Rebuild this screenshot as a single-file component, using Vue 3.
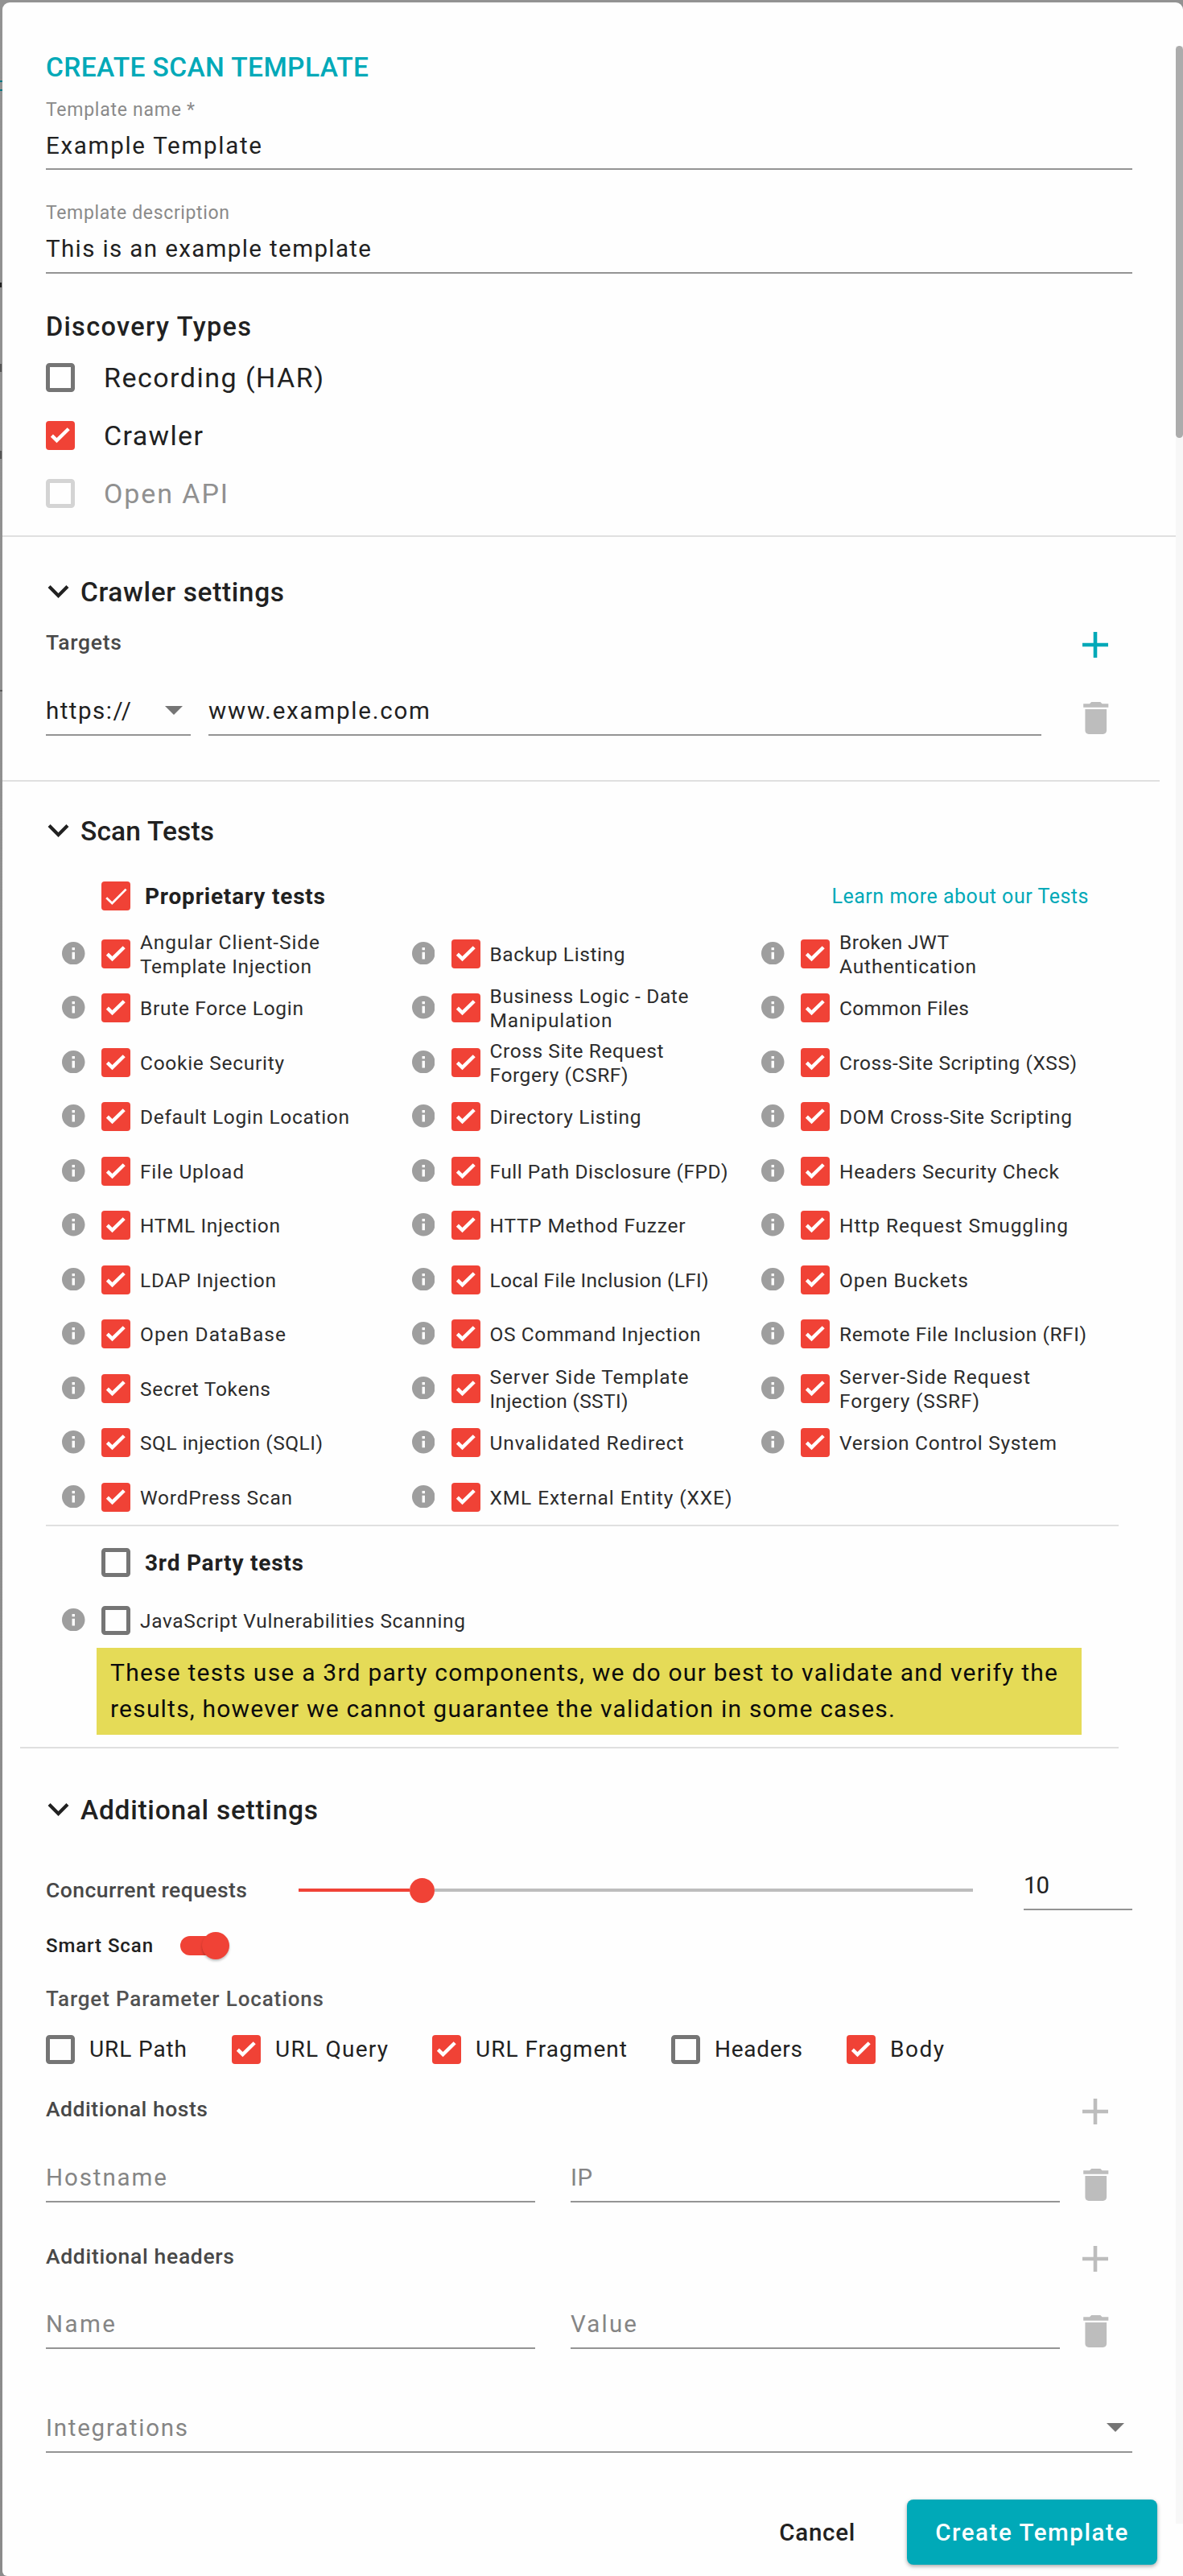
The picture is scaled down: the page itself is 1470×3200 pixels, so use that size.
<script setup>
import { h } from 'vue'

// Spreads a label's letters so that it takes up the given width in pixels.
const vFit = {
  mounted(el, binding) {
    const count = el.textContent.length
    if (!binding.value || count < 2) return
    const natural = el.getBoundingClientRect().width
    el.style.letterSpacing = ((binding.value - natural) / (count - 1)).toFixed(3) + 'px'
  },
}

const CheckBox = (props) =>
  h('svg', { viewBox: '0 0 36 36', width: 36, height: 36, style: { flex: 'none', display: 'block' } },
    props.on
      ? [
          h('rect', { width: 36, height: 36, rx: 4, fill: '#f04236' }),
          h('path', props.thin
            ? { d: 'M6.2 20.2L13.3 27L30.6 9.6', fill: 'none', stroke: '#fff', 'stroke-width': 2.7 }
            : { d: 'M7.4 18.2L13.5 24.1L28.2 9.7', fill: 'none', stroke: '#fff', 'stroke-width': 4.4 }),
        ]
      : [h('rect', { x: 2.5, y: 2.5, width: 31, height: 31, rx: 2, fill: 'none', stroke: props.off ? '#d4d4d4' : '#757575', 'stroke-width': 5 })])
CheckBox.props = { on: Boolean, off: Boolean, thin: Boolean }

const icon = (viewBox, width, height, d) => () =>
  h('svg', { viewBox, width, height, fill: 'currentColor', style: { flex: 'none', display: 'block' } }, [h('path', { d })])
const InfoIcon = icon('2 2 20 20', 28.5, 28.5, 'M12 2C6.48 2 2 6.48 2 12s4.48 10 10 10 10-4.48 10-10S17.52 2 12 2zm1.2 15h-2.4v-6h2.4v6zm0-7.8h-2.4V6.9h2.4v2.3z')
const TrashIcon = icon('5 3 14 18', 31.5, 40, 'M6 19c0 1.1.9 2 2 2h8c1.1 0 2-.9 2-2V7H6v12zM19 4h-3.5l-1-1h-5l-1 1H5v2h14V4z')
const PlusIcon = icon('5 5 14 14', 32, 32, 'M19 13h-6v6h-2v-6H5v-2h6V5h2v6h6v2z')
const Chevron = icon('6 8.59 12 7.41', 27, 16, 'M16.59 8.59L12 13.17 7.41 8.59 6 10l6 6 6-6z')
const Caret = icon('7 10 10 5', 22, 11, 'M7 10l5 5 5-5z')

const tests = [
  [['Angular Client-Side', 223], ['Template Injection', 213]],
  [['Backup Listing', 168]],
  [['Broken JWT', 136], ['Authentication', 170]],
  [['Brute Force Login', 203]],
  [['Business Logic - Date', 247], ['Manipulation', 152]],
  [['Common Files', 161]],
  [['Cookie Security', 179]],
  [['Cross Site Request', 216], ['Forgery (CSRF)', 172]],
  [['Cross-Site Scripting (XSS)', 295]],
  [['Default Login Location', 260]],
  [['Directory Listing', 188]],
  [['DOM Cross-Site Scripting', 289]],
  [['File Upload', 129]],
  [['Full Path Disclosure (FPD)', 296]],
  [['Headers Security Check', 273]],
  [['HTML Injection', 174]],
  [['HTTP Method Fuzzer', 243]],
  [['Http Request Smuggling', 284]],
  [['LDAP Injection', 169]],
  [['Local File Inclusion (LFI)', 272]],
  [['Open Buckets', 160]],
  [['Open DataBase', 181]],
  [['OS Command Injection', 262]],
  [['Remote File Inclusion (RFI)', 307]],
  [['Secret Tokens', 162]],
  [['Server Side Template', 247], ['Injection (SSTI)', 172]],
  [['Server-Side Request', 237], ['Forgery (SSRF)', 174]],
  [['SQL injection (SQLI)', 227]],
  [['Unvalidated Redirect', 241]],
  [['Version Control System', 270]],
  [['WordPress Scan', 189]],
  [['XML External Entity (XXE)', 301]],
]

const discovery = [
  { name: 'Recording (HAR)', width: 273 },
  { name: 'Crawler', width: 123, on: true },
  { name: 'Open API', width: 154, off: true },
]

const locations = [
  { name: 'URL Path', width: 121 },
  { name: 'URL Query', width: 140, on: true },
  { name: 'URL Fragment', width: 188, on: true },
  { name: 'Headers', width: 109 },
  { name: 'Body', width: 67, on: true },
]

const extras = [
  { title: 'Additional hosts', width: 201, a: 'Hostname', aw: 150, b: 'IP', bw: 27, cls: 'hosts' },
  { title: 'Additional headers', width: 234, a: 'Name', aw: 86, b: 'Value', bw: 82, cls: 'headers' },
]
</script>

<template>
  <div class="backdrop">
    <main class="dialog">
      <h1 class="title"><span v-fit="401">CREATE SCAN TEMPLATE</span></h1>

      <div class="field first">
        <div class="caption"><span v-fit="185">Template name *</span></div>
        <div class="value"><span v-fit="268">Example Template</span></div>
      </div>
      <div class="field second">
        <div class="caption"><span v-fit="228">Template description</span></div>
        <div class="value"><span v-fit="404">This is an example template</span></div>
      </div>

      <h2 class="subtitle"><span v-fit="255">Discovery Types</span></h2>
      <div class="discovery">
        <label v-for="d in discovery" :key="d.name" :class="{ disabled: d.off }">
          <CheckBox :on="d.on" :off="d.off" /><span v-fit="d.width">{{ d.name }}</span>
        </label>
      </div>
      <div class="rule rule-discovery"></div>

      <h2 class="section crawler"><Chevron /><span v-fit="253">Crawler settings</span></h2>
      <div class="list-head targets"><span v-fit="94">Targets</span><PlusIcon class="teal" /></div>
      <div class="inputs target-inputs">
        <div class="line protocol"><span v-fit="106">https://</span><Caret class="caret" /></div>
        <div class="line address"><span v-fit="275">www.example.com</span></div>
        <TrashIcon class="trash" />
      </div>
      <div class="rule rule-crawler"></div>

      <h2 class="section scan"><Chevron /><span v-fit="166">Scan Tests</span></h2>
      <div class="group proprietary">
        <CheckBox on thin /><b v-fit="224">Proprietary tests</b>
        <a v-fit="319">Learn more about our Tests</a>
      </div>
      <div class="tests">
        <div v-for="(t, i) in tests" :key="i" class="test">
          <InfoIcon class="info" /><CheckBox on />
          <div class="test-name">
            <div v-for="l in t" :key="l[0]"><span v-fit="l[1]">{{ l[0] }}</span></div>
          </div>
        </div>
      </div>
      <div class="rule rule-tests"></div>
      <div class="group third"><CheckBox /><b v-fit="197">3rd Party tests</b></div>
      <div class="test javascript">
        <InfoIcon class="info" /><CheckBox />
        <div class="test-name"><span v-fit="404">JavaScript Vulnerabilities Scanning</span></div>
      </div>
      <div class="notice">
        <div><span v-fit="1177">These tests use a 3rd party components, we do our best to validate and verify the</span></div>
        <div><span v-fit="975">results, however we cannot guarantee the validation in some cases.</span></div>
      </div>
      <div class="rule rule-scan"></div>

      <h2 class="section additional"><Chevron /><span v-fit="295">Additional settings</span></h2>
      <div class="requests">
        <div class="small-label"><span v-fit="250">Concurrent requests</span></div>
        <div class="slider"><div class="filled"></div><div class="knob"></div><div class="rest"></div></div>
        <div class="line amount"><span v-fit="32">10</span></div>
      </div>
      <div class="smart">
        <span v-fit="133">Smart Scan</span>
        <div class="toggle"><div class="toggle-knob"></div></div>
      </div>
      <div class="parameter-title"><span v-fit="345">Target Parameter Locations</span></div>
      <div class="locations">
        <label v-for="(l, i) in locations" :key="l.name" :class="'loc' + i">
          <CheckBox :on="l.on" /><span v-fit="l.width">{{ l.name }}</span>
        </label>
      </div>

      <template v-for="e in extras" :key="e.title">
        <div class="list-head" :class="e.cls"><span v-fit="e.width">{{ e.title }}</span><PlusIcon class="muted" /></div>
        <div class="inputs" :class="e.cls + '-inputs'">
          <div class="line half"><span v-fit="e.aw">{{ e.a }}</span></div>
          <div class="line half"><span v-fit="e.bw">{{ e.b }}</span></div>
          <TrashIcon class="trash" />
        </div>
      </template>
      <div class="line integrations"><span v-fit="176">Integrations</span><Caret class="caret" /></div>

      <footer class="actions">
        <button class="cancel"><span v-fit="94">Cancel</span></button>
        <button class="create"><span v-fit="239">Create Template</span></button>
      </footer>
      <div class="scrollbar"><div class="scroll-thumb"></div></div>
    </main>
  </div>
</template>

<style>
body { margin: 0; }
</style>

<style scoped>
.backdrop {
  box-sizing: border-box;
  width: 1470px;
  height: 3200px;
  padding: 3px 0 0 3px;
  overflow: hidden;
  font-family: Roboto, "Liberation Sans", sans-serif;
  color: #212121;
  background:
    linear-gradient(#087784, #087784) 0 100px / 3px 2px no-repeat,
    linear-gradient(#087784, #087784) 0 111px / 3px 2px no-repeat,
    linear-gradient(#222, #222) 0 351px / 2px 6px no-repeat,
    linear-gradient(#555, #555) 0 452px / 2px 10px no-repeat,
    linear-gradient(#555, #555) 0 560px / 2px 10px no-repeat,
    linear-gradient(#5c5c5c, #5c5c5c) 0 857px / 3px 2px no-repeat,
    linear-gradient(#929292, #8b8b8b);
}
.dialog {
  position: relative;
  box-sizing: border-box;
  display: flex;
  flex-direction: column;
  height: 3197px;
  padding: 60px 63px 0 54px;
  background: #fefefe;
  border-radius: 9px 9px 0 6px;
}
.dialog > * { flex: none; }
span, b, a { display: inline-block; white-space: pre; flex: none; }
h1, h2 { margin: 0; font-weight: 500; }
.title { height: 40px; line-height: 42px; font-size: 33.5px; color: #00a9b8; }
.field { box-sizing: border-box; border-bottom: 2px solid #949494; }
.first { margin-top: 21px; height: 87px; }
.second { margin-top: 41px; height: 88px; }
.caption { height: 24px; line-height: 26px; font-size: 23px; color: #8a8a8a; margin-bottom: 15px; }
.value { height: 36px; line-height: 36px; font-size: 29.5px; }
.subtitle { margin-top: 45px; height: 40px; line-height: 42px; font-size: 32.5px; }
.discovery { margin-top: 8px; }
.discovery label { display: flex; align-items: center; height: 72px; gap: 36px; font-size: 34px; }
.disabled { color: #909090; }
.rule { height: 2px; background: #e0e0e0; }
.rule-discovery { margin: 16px -54px 0; }
.rule-crawler { margin: 55px -34px 0 -54px; }
.rule-tests { margin: 0 17px 0 0; }
.rule-scan { margin: 15px 17px 0 -32px; }
.section { display: flex; align-items: center; height: 40px; padding-left: 2px; gap: 14px; font-size: 33.5px; line-height: 40px; }
.section span { padding-top: 2px; }
.crawler { margin-top: 48px; }
.scan { margin-top: 41px; }
.additional { margin-top: 56px; }
.list-head { display: flex; align-items: center; justify-content: space-between; height: 32px; padding-right: 30.5px; font-size: 26.5px; font-weight: 500; color: #484848; }
.list-head span { padding-bottom: 8px; }
.targets { margin-top: 30px; }
.teal { color: #00a9b8; }
.muted { color: #bdbdbd; }
.inputs { display: flex; height: 50px; }
.target-inputs { margin-top: 47px; }
.line { box-sizing: border-box; display: flex; justify-content: space-between; height: 50px; border-bottom: 2px solid #949494; font-size: 29.5px; line-height: 38px; }
.protocol { width: 180px; margin-right: 22px; }
.address { width: 1035px; margin-right: 52px; }
.caret { margin: 13px 10px 0 0; color: #757575; }
.trash { margin-top: 8px; color: #bdbdbd; }
.group { display: flex; align-items: center; height: 40px; padding-left: 69px; font-size: 28px; }
.group b { margin-left: 18px; font-weight: 700; }
.group a { margin-left: auto; margin-right: 54px; font-size: 25px; color: #00a9b8; }
.proprietary { margin-top: 41px; }
.tests { display: grid; grid-template-columns: repeat(3, 434.5px); grid-auto-rows: 67.5px; margin-top: 18px; height: 743px; }
.test { display: flex; align-items: center; padding-left: 20px; }
.info { margin: 0 20.5px 2px 0; color: #9e9e9e; }
.test-name { margin-left: 12px; padding-top: 2px; font-size: 24.5px; line-height: 30px; color: #2c2c2c; }
.third { margin-top: 25px; }
.javascript { margin-top: 32px; height: 40px; }
.notice { box-sizing: border-box; margin: 14px 63px 0 63px; height: 108px; padding: 8px 17px; background: #e5db57; color: #0c0c0c; font-size: 30px; line-height: 45px; }
.requests { display: flex; height: 50px; margin-top: 55px; }
.small-label { width: 314px; line-height: 50px; font-size: 26.5px; font-weight: 500; color: #484848; }
.slider { display: flex; align-items: center; width: 838px; margin-right: 63px; }
.filled { width: 138px; height: 4px; background: #f04236; }
.knob { width: 31px; height: 31px; border-radius: 50%; background: #f04236; }
.rest { flex: 1; height: 4px; background: #bdbdbd; }
.amount { width: 135px; }
.smart { display: flex; align-items: center; height: 34px; margin-top: 27px; font-size: 24px; font-weight: 500; }
.toggle { display: flex; align-items: center; justify-content: flex-end; width: 57px; height: 24px; margin-left: 33px; border-radius: 12px; background: #f04236; }
.toggle-knob { flex: none; width: 34px; height: 34px; margin-right: -4px; border-radius: 50%; background: #f04236; box-shadow: 0 2px 3px rgba(0, 0, 0, .25); }
.parameter-title { height: 30px; margin-top: 34px; line-height: 30px; font-size: 26px; font-weight: 500; color: #525252; }
.locations { display: flex; height: 36px; margin-top: 30px; font-size: 28px; }
.locations label { display: flex; align-items: center; gap: 18px; }
.locations span { padding-bottom: 1px; }
.loc0 { width: 231px; }
.loc1 { width: 249px; }
.loc2 { width: 297px; }
.loc3 { width: 218px; }
.hosts { margin-top: 43px; }
.hosts-inputs { margin-top: 47px; }
.headers { margin-top: 54px; }
.headers-inputs { margin-top: 46px; }
.half { width: 608px; color: #858585; margin-right: 44px; }
.half + .half { margin-right: 29px; }
.integrations { margin-top: 79px; color: #858585; }
.actions { display: flex; justify-content: flex-end; gap: 64px; height: 81px; margin: 58px -31px 0 0; }
button { border: 0; padding: 0; font: 500 29.5px Roboto, "Liberation Sans", sans-serif; color: #212121; background: none; }
.create { width: 311px; border-radius: 8px; font-weight: 500; background: #00a9b8; color: #fff; box-shadow: 0 2px 5px rgba(0, 0, 0, .35); }
.scrollbar { position: absolute; top: 54px; right: 0; width: 9px; height: 3078px; background: #f7f7f7; }
.scroll-thumb { height: 487px; border-radius: 5px; background: #acacac; }
</style>
